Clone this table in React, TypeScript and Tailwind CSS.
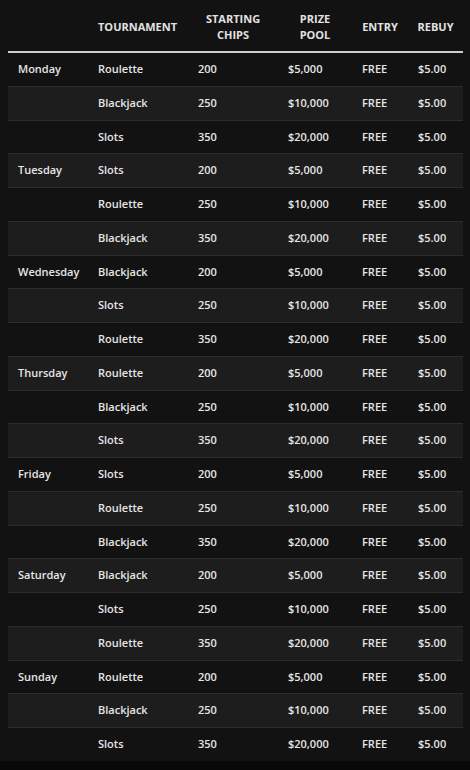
import React from "react";

type Row = { day?: string; game: string; chips: string; prize: string };

const days = ["Monday", "Tuesday", "Wednesday", "Thursday", "Friday", "Saturday", "Sunday"];
const games: string[][] = [
  ["Roulette", "Blackjack", "Slots"],
  ["Slots", "Roulette", "Blackjack"],
  ["Blackjack", "Slots", "Roulette"],
  ["Roulette", "Blackjack", "Slots"],
  ["Slots", "Roulette", "Blackjack"],
  ["Blackjack", "Slots", "Roulette"],
  ["Roulette", "Blackjack", "Slots"],
];
const chips = ["200", "250", "350"];
const prizes = ["$5,000", "$10,000", "$20,000"];

const rows: Row[] = [];
days.forEach((d, i) => {
  games[i].forEach((g, j) => {
    rows.push({ day: j === 0 ? d : undefined, game: g, chips: chips[j], prize: prizes[j] });
  });
});

const td = "pl-[10px] py-[8px] text-[11px] leading-[16.75px] font-semibold text-[#e6e6e6] whitespace-nowrap";
const th = "px-[4px] pt-[11px] pb-[8px] text-center align-middle text-[11px] leading-[16px] font-bold uppercase text-[#e2e2e2] whitespace-nowrap";

export default function App() {
  return (
    <div
      className="w-[470px] min-h-[770px] bg-[#080808]"
      style={{ fontFamily: '"Open Sans", "Noto Sans", sans-serif' }}
    >
      <div className="bg-[#121212] px-[8px]">
        <table className="w-[455px] table-fixed border-collapse">
          <colgroup>
            <col className="w-[80px]" />
            <col className="w-[100px]" />
            <col className="w-[90px]" />
            <col className="w-[74px]" />
            <col className="w-[56px]" />
            <col className="w-[55px]" />
          </colgroup>
          <thead>
            <tr className="border-b-2 border-[#cfcfcf]">
              <th className="h-[51px]"></th>
              <th className={th + " !text-left !pl-[10px]"}>Tournament</th>
              <th className={th}>
                Starting
                <br />
                Chips
              </th>
              <th className={th}>
                Prize
                <br />
                Pool
              </th>
              <th className={th}>Entry</th>
              <th className={th}>Rebuy</th>
            </tr>
          </thead>
          <tbody>
            {rows.map((r, i) => (
              <tr
                key={i}
                className={
                  (i % 2 === 1 ? "bg-[#1d1d1d] " : "bg-[#121212] ") +
                  (i === rows.length - 1 ? "" : "border-b border-[#2c2c2c]")
                }
              >
                <td className={td}>{r.day ?? ""}</td>
                <td className={td}>{r.game}</td>
                <td className={td}>{r.chips}</td>
                <td className={td}>{r.prize}</td>
                <td className={td}>FREE</td>
                <td className={td}>$5.00</td>
              </tr>
            ))}
          </tbody>
        </table>
      </div>
    </div>
  );
}
